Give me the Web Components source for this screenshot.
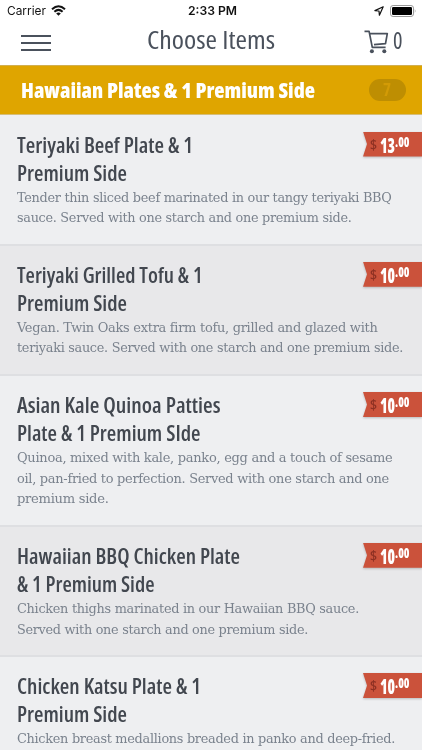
<!DOCTYPE html>
<html lang="en">
  <head>
    <meta charset="utf-8" />
    <title>Choose Items</title>
    <meta name="viewport" content="width=device-width, initial-scale=1" />
    <style>
      body {
        margin: 0;
        height: 750px;
        overflow: hidden;
        background: #eeeff1;
        font-family: 'Open Sans', 'Noto Sans', sans-serif;
        font-stretch: 75%;
      }
    </style>

    <template id="statusTemplate">
      <style>
        :host {
          display: grid;
          grid-template-columns: 1fr auto 1fr;
          align-items: center;
          height: 21px;
          padding: 0 5px 0 7px;
          background: #fff;
          color: #111;
          font: 12px/21px Inter, sans-serif;
        }
        div {
          display: flex;
          align-items: center;
          height: 21px;
        }
        .left {
          gap: 5px;
        }
        .right {
          justify-content: flex-end;
          gap: 6px;
        }
        .time {
          font-weight: 600;
        }
        svg {
          display: block;
        }
      </style>
      <div class="left">
        <fit-text width="39"><slot name="carrier"></slot></fit-text>
        <svg width="15" height="11" viewBox="0 0 15 11" fill="none" stroke="#111" stroke-width="2">
          <path d="M1 4.2Q7.5-1.8 14 4.2M3.4 6.7Q7.5 3 11.6 6.7" />
          <path d="M5.2 8.4Q7.5 6.4 9.8 8.4L7.5 10.8Z" fill="#111" stroke="none" />
        </svg>
      </div>
      <div class="time"><fit-text width="49"><slot name="time"></slot></fit-text></div>
      <div class="right">
        <svg width="10" height="10" viewBox="0 0 10 10" fill="none" stroke="#111" stroke-width="1.2" stroke-linejoin="round">
          <path d="M9.2.8L.9 4.6 5 5 5.4 9.2Z" />
        </svg>
        <svg width="27" height="12" viewBox="0 0 27 12">
          <rect x=".5" y=".5" width="23" height="11" rx="2.6" fill="#fff" stroke="#999" />
          <rect x="2" y="2" width="20" height="8" rx="1.2" fill="#000" />
          <path d="M24.8 4Q26.3 6 24.8 8Z" fill="#999" />
        </svg>
      </div>
    </template>

    <template id="navTemplate">
      <style>
        :host {
          display: grid;
          grid-template-columns: 1fr auto 1fr;
          align-items: center;
          height: 44px;
          padding: 0 20px 0 21px;
          background: #fff;
          color: #4a515c;
          font-size: 25.5px;
          font-weight: 400;
        }
        .title {
          height: 44px;
          line-height: 37px;
          margin-left: -2px;
        }
        .menu {
          display: flex;
          flex-direction: column;
          gap: 5.4px;
        }
        .menu i {
          width: 30px;
          height: 2px;
          background: #4a515c;
        }
        .cart {
          display: flex;
          justify-content: flex-end;
          gap: 4px;
          height: 44px;
          font-size: 23px;
          font-weight: 500;
          line-height: 39px;
        }
        svg {
          margin-top: 9px;
        }
      </style>
      <div class="menu"><i></i><i></i><i></i></div>
      <div class="title"><fit-text width="128"><slot></slot></fit-text></div>
      <div class="cart">
        <svg width="25" height="24" viewBox="0 0 25 24" fill="none" stroke="#4a515c" stroke-width="1.7" stroke-linejoin="round">
          <path d="M.5 1.4H5.1L8.3 17.4H21.6M5.6 3.6H23.3L21.5 13.6 10 14.7" />
          <circle cx="7.9" cy="21.3" r="2" fill="#4a515c" stroke="none" />
          <circle cx="20.3" cy="21.3" r="2" fill="#4a515c" stroke="none" />
        </svg>
        <fit-text width="9.5"><slot name="count"></slot></fit-text>
      </div>
    </template>

    <template id="sectionTemplate">
      <style>
        :host {
          display: flex;
          align-items: center;
          justify-content: space-between;
          box-sizing: border-box;
          height: 50px;
          margin-bottom: 0.5px;
          padding: 0 16px 0 20.5px;
          background: #dfa500;
          border-top: 1px solid #d1af50;
          border-bottom: 1px solid #d5bd78;
          color: #fff;
          font-size: 20.5px;
          font-weight: 800;
        }
        .badge {
          display: flex;
          justify-content: center;
          width: 37.5px;
          height: 22px;
          border-radius: 11px;
          background: #be8e02;
          color: #d39b06;
          font-size: 17px;
          font-weight: 700;
          line-height: 22px;
        }
      </style>
      <fit-text width="294"><slot></slot></fit-text>
      <div class="badge"><fit-text width="8"><slot name="count"></slot></fit-text></div>
    </template>

    <template id="priceTemplate">
      <style>
        :host {
          display: block;
          filter: drop-shadow(0 1px 1px rgba(0, 0, 0, 0.22));
        }
        .tag {
          display: flex;
          box-sizing: border-box;
          width: 59px;
          height: 25px;
          padding-left: 7px;
          background: #cb523b;
          clip-path: polygon(0 0, 100% 0, 100% 100%, 0 100%, 4px 50%);
          color: #fff;
          font-weight: 800;
          white-space: nowrap;
        }
        .sign {
          margin-right: 2.5px;
          color: #8d3023;
          font-size: 14px;
          font-weight: 600;
          line-height: 25px;
        }
        .whole {
          font-size: 21.5px;
          line-height: 25px;
        }
        .cents {
          font-size: 14px;
          line-height: 20px;
        }
      </style>
      <div class="tag">
        <fit-text class="sign" width="7">$</fit-text>
        <fit-text class="whole" width="15"><slot name="whole"></slot></fit-text>
        <fit-text class="cents" width="14.5"><slot name="cents"></slot></fit-text>
      </div>
    </template>

    <template id="itemTemplate">
      <style>
        :host {
          display: block;
          box-sizing: border-box;
          padding: 15px 0 15.8px 16.5px;
          border-bottom: 2px solid #dedfe2;
          background: #eeeff1;
        }
        :host(.alt) {
          background: #e8e8ea;
        }
        .top {
          display: flex;
          justify-content: space-between;
          align-items: flex-start;
        }
        .name {
          color: #42474f;
          font-size: 21px;
          font-weight: 560;
          line-height: 28px;
        }
        .text {
          color: #7a828d;
          font: 13.8px/20.7px 'DejaVu Serif Condensed', 'DejaVu Serif', serif;
          font-stretch: condensed;
          letter-spacing: -0.02em;
        }
        price-tag {
          margin-top: 1px;
        }
      </style>
      <div class="top">
        <div class="name"><slot name="name"></slot></div>
        <price-tag></price-tag>
      </div>
      <div class="text"><slot name="text"></slot></div>
    </template>
  </head>

  <body>
    <status-bar>
      <span slot="carrier">Carrier</span>
      <span slot="time">2:33 PM</span>
    </status-bar>
    <nav-bar>Choose Items<span slot="count">0</span></nav-bar>
    <section-header>Hawaiian Plates &amp; 1 Premium Side<span slot="count">7</span></section-header>
    <main id="items"></main>

    <script>
      // each line of text is paired with the width it is condensed to
      const items = [
        {
          price: ['13', '.00'],
          name: [['Teriyaki Beef Plate & 1', 176], ['Premium Side', 110]],
          text: [
            ['Tender thin sliced beef marinated in our tangy teriyaki BBQ', 374.5],
            ['sauce. Served with one starch and one premium side.', 334.5]
          ]
        },
        {
          price: ['10', '.00'],
          name: [['Teriyaki Grilled Tofu & 1', 185.5], ['Premium Side', 110]],
          text: [
            ['Vegan. Twin Oaks extra firm tofu, grilled and glazed with', 360.5],
            ['teriyaki sauce. Served with one starch and one premium side.', 386]
          ]
        },
        {
          price: ['10', '.00'],
          name: [['Asian Kale Quinoa Patties', 203.5], ['Plate & 1 Premium SIde', 183.5]],
          text: [
            ['Quinoa, mixed with kale, panko, egg and a touch of sesame', 375.5],
            ['oil, pan-fried to perfection. Served with one starch and one', 372],
            ['premium side.', 91.5]
          ]
        },
        {
          price: ['10', '.00'],
          name: [['Hawaiian BBQ Chicken Plate', 223], ['& 1 Premium Side', 137.5]],
          text: [
            ['Chicken thighs marinated in our Hawaiian BBQ sauce.', 342],
            ['Served with one starch and one premium side.', 291]
          ]
        },
        {
          price: ['10', '.00'],
          name: [['Chicken Katsu Plate & 1', 184], ['Premium Side', 110]],
          text: [['Chicken breast medallions breaded in panko and deep-fried.', 378]]
        }
      ];

      // one line of text, squeezed horizontally to its width attribute
      customElements.define(
        'fit-text',
        class extends HTMLElement {
          constructor() {
            super();
            this.attachShadow({ mode: 'open' }).innerHTML = `
              <style>
                :host { display: block; white-space: nowrap; }
                span { display: inline-block; transform-origin: 0 50%; vertical-align: top; }
              </style>
              <span><slot></slot></span>`;
          }
          connectedCallback() {
            const width = Number(this.getAttribute('width'));
            this.style.width = `${width}px`;
            requestAnimationFrame(() => this.fit(width));
          }
          fit(width) {
            const line = this.shadowRoot.querySelector('span');
            const natural = line.getBoundingClientRect().width;
            if (natural) line.style.transform = `scaleX(${width / natural})`;
          }
        }
      );

      function defineFromTemplate(tag, templateId) {
        customElements.define(
          tag,
          class extends HTMLElement {
            constructor() {
              super();
              const template = document.getElementById(templateId).content;
              this.attachShadow({ mode: 'open' }).appendChild(
                template.cloneNode(true)
              );
            }
          }
        );
      }

      defineFromTemplate('status-bar', 'statusTemplate');
      defineFromTemplate('nav-bar', 'navTemplate');
      defineFromTemplate('section-header', 'sectionTemplate');
      defineFromTemplate('price-tag', 'priceTemplate');
      defineFromTemplate('menu-item', 'itemTemplate');

      function createLines(slot, lines) {
        const block = document.createElement('div');
        block.slot = slot;
        lines.forEach(([text, width]) => {
          const line = document.createElement('fit-text');
          line.setAttribute('width', width);
          line.textContent = text;
          block.appendChild(line);
        });
        return block;
      }

      function createItem(item, index) {
        const element = document.createElement('menu-item');
        if (index % 2) element.className = 'alt';
        element.append(createLines('name', item.name), createLines('text', item.text));

        const tag = element.shadowRoot.querySelector('price-tag');
        customElements.upgrade(tag);
        ['whole', 'cents'].forEach((slot, i) => {
          const part = document.createElement('span');
          part.slot = slot;
          part.textContent = item.price[i];
          tag.appendChild(part);
        });
        return element;
      }

      const list = document.getElementById('items');
      items.forEach((item, index) => list.appendChild(createItem(item, index)));
    </script>
  </body>
</html>
